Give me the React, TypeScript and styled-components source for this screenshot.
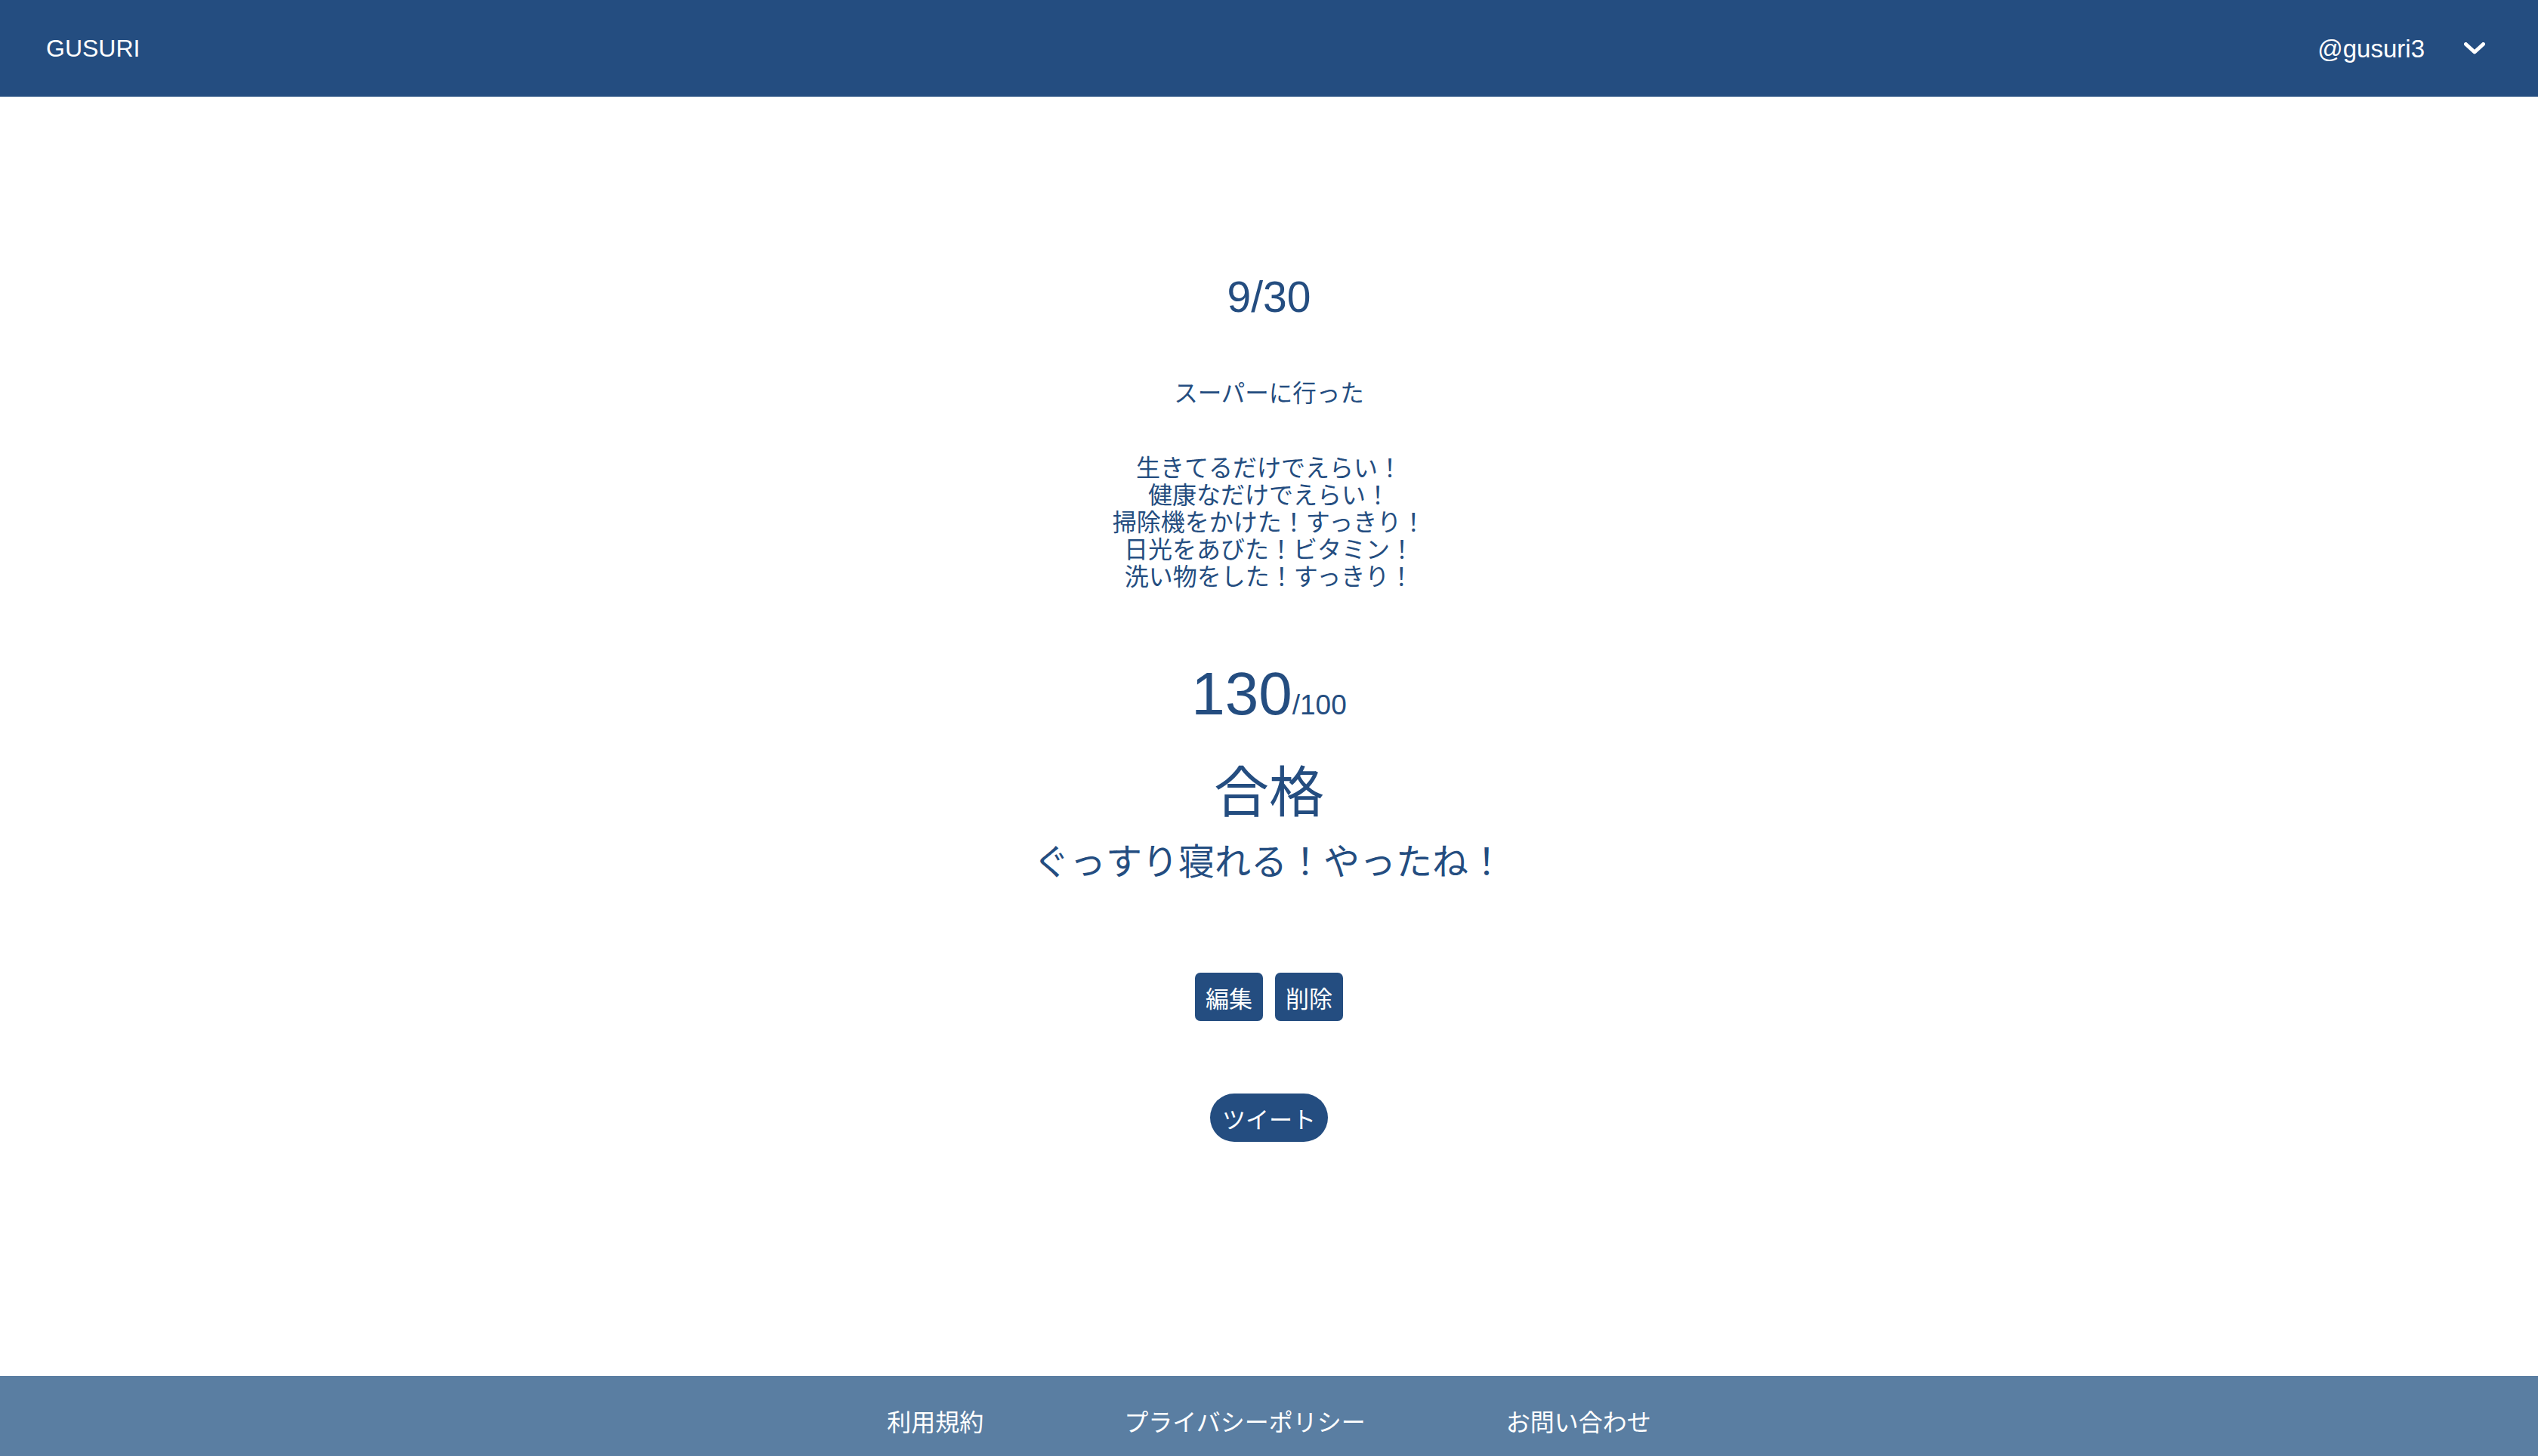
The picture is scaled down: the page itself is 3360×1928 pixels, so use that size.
import React from "react";
import styled, { createGlobalStyle } from "styled-components";

const GlobalStyles = createGlobalStyle`
  *, *::before, *::after {
    box-sizing: border-box;
  }

  * {
    margin: 0;
    padding: 0;
  }

  html, body, #root {
    height: 100%;
  }

  body {
    background: #ffffff;
    color: #244d80;
    font-family: "Liberation Sans", "Noto Sans CJK JP", sans-serif;
    -webkit-font-smoothing: antialiased;
  }

  button {
    font: inherit;
  }
`;

const goodThings = [
  "生きてるだけでえらい！",
  "健康なだけでえらい！",
  "掃除機をかけた！すっきり！",
  "日光をあびた！ビタミン！",
  "洗い物をした！すっきり！",
];

const footerLinks = ["利用規約", "プライバシーポリシー", "お問い合わせ"];

const App = () => {
  return (
    <Page>
      <GlobalStyles />

      <Header>
        <Logo>GUSURI</Logo>
        <UserMenu>
          <UserName>@gusuri3</UserName>
          <Chevron width="28" height="16" viewBox="0 0 28 16">
            <polyline
              points="2.5,2.5 14,13 25.5,2.5"
              fill="none"
              stroke="#ffffff"
              strokeWidth="5"
              strokeLinecap="round"
              strokeLinejoin="round"
            />
          </Chevron>
        </UserMenu>
      </Header>

      <Main>
        <DateTitle>9/30</DateTitle>
        <Activity>スーパーに行った</Activity>
        <GoodList>
          {goodThings.map((line) => (
            <li key={line}>{line}</li>
          ))}
        </GoodList>
        <Score>
          130<Max>/100</Max>
        </Score>
        <Result>合格</Result>
        <Message>ぐっすり寝れる！やったね！</Message>
        <ActionRow>
          <ActionButton>編集</ActionButton>
          <ActionButton>削除</ActionButton>
        </ActionRow>
        <TweetButton>ツイート</TweetButton>
      </Main>

      <Footer>
        {footerLinks.map((label) => (
          <FooterLink key={label}>{label}</FooterLink>
        ))}
      </Footer>
    </Page>
  );
};

export default App;

const Page = styled.div`
  min-height: 100vh;
  display: flex;
  flex-direction: column;
`;

const Header = styled.header`
  height: 128px;
  flex-shrink: 0;
  background: #244d80;
  display: flex;
  align-items: center;
  justify-content: space-between;
  padding: 0 70px 0 61px;
  color: #ffffff;
`;

const Logo = styled.div`
  font-size: 32px;
  line-height: 1;
`;

const UserMenu = styled.div`
  display: flex;
  align-items: center;
  gap: 52px;
`;

const UserName = styled.span`
  font-size: 33px;
  line-height: 1;
`;

const Chevron = styled.svg`
  display: block;
`;

const Main = styled.main`
  flex: 1;
  display: flex;
  flex-direction: column;
  align-items: center;
  text-align: center;
`;

const DateTitle = styled.h2`
  margin-top: 237px;
  font-size: 57px;
  line-height: 56px;
  font-weight: 400;
`;

const Activity = styled.p`
  margin-top: 79px;
  font-family: "Noto Sans CJK JP", sans-serif;
  font-size: 31.5px;
  line-height: 36px;
`;

const GoodList = styled.ul`
  margin-top: 66px;
  list-style: none;
  font-size: 32px;
  line-height: 36px;
`;

const Score = styled.div`
  margin-top: 97px;
  font-size: 80px;
  line-height: 80px;
`;

const Max = styled.span`
  font-size: 37px;
  line-height: 1;
`;

const Result = styled.h1`
  margin-top: 40px;
  font-family: "Noto Sans CJK JP", sans-serif;
  font-size: 73px;
  line-height: 88px;
  font-weight: 400;
`;

const Message = styled.p`
  margin-top: 22px;
  font-family: "Noto Sans CJK JP", sans-serif;
  font-size: 48px;
  line-height: 56px;
`;

const ActionRow = styled.div`
  margin-top: 123px;
  display: flex;
  gap: 16px;
`;

const ActionButton = styled.button`
  height: 64px;
  padding: 0 14px;
  border: none;
  border-radius: 7px;
  background: #244d80;
  color: #ffffff;
  font-family: "Noto Sans CJK JP", sans-serif;
  font-size: 31px;
  line-height: 1;
  cursor: pointer;
`;

const TweetButton = styled(ActionButton)`
  margin-top: 96px;
  padding: 0 16px;
  border-radius: 32px;
`;

const Footer = styled.footer`
  height: 106px;
  flex-shrink: 0;
  background: #5a7ea2;
  display: flex;
  justify-content: center;
  align-items: flex-start;
  gap: 186px;
  padding-top: 36px;
`;

const FooterLink = styled.a`
  color: #ffffff;
  font-family: "Noto Sans CJK JP", sans-serif;
  font-size: 32px;
  line-height: 46px;
  cursor: pointer;
`;
